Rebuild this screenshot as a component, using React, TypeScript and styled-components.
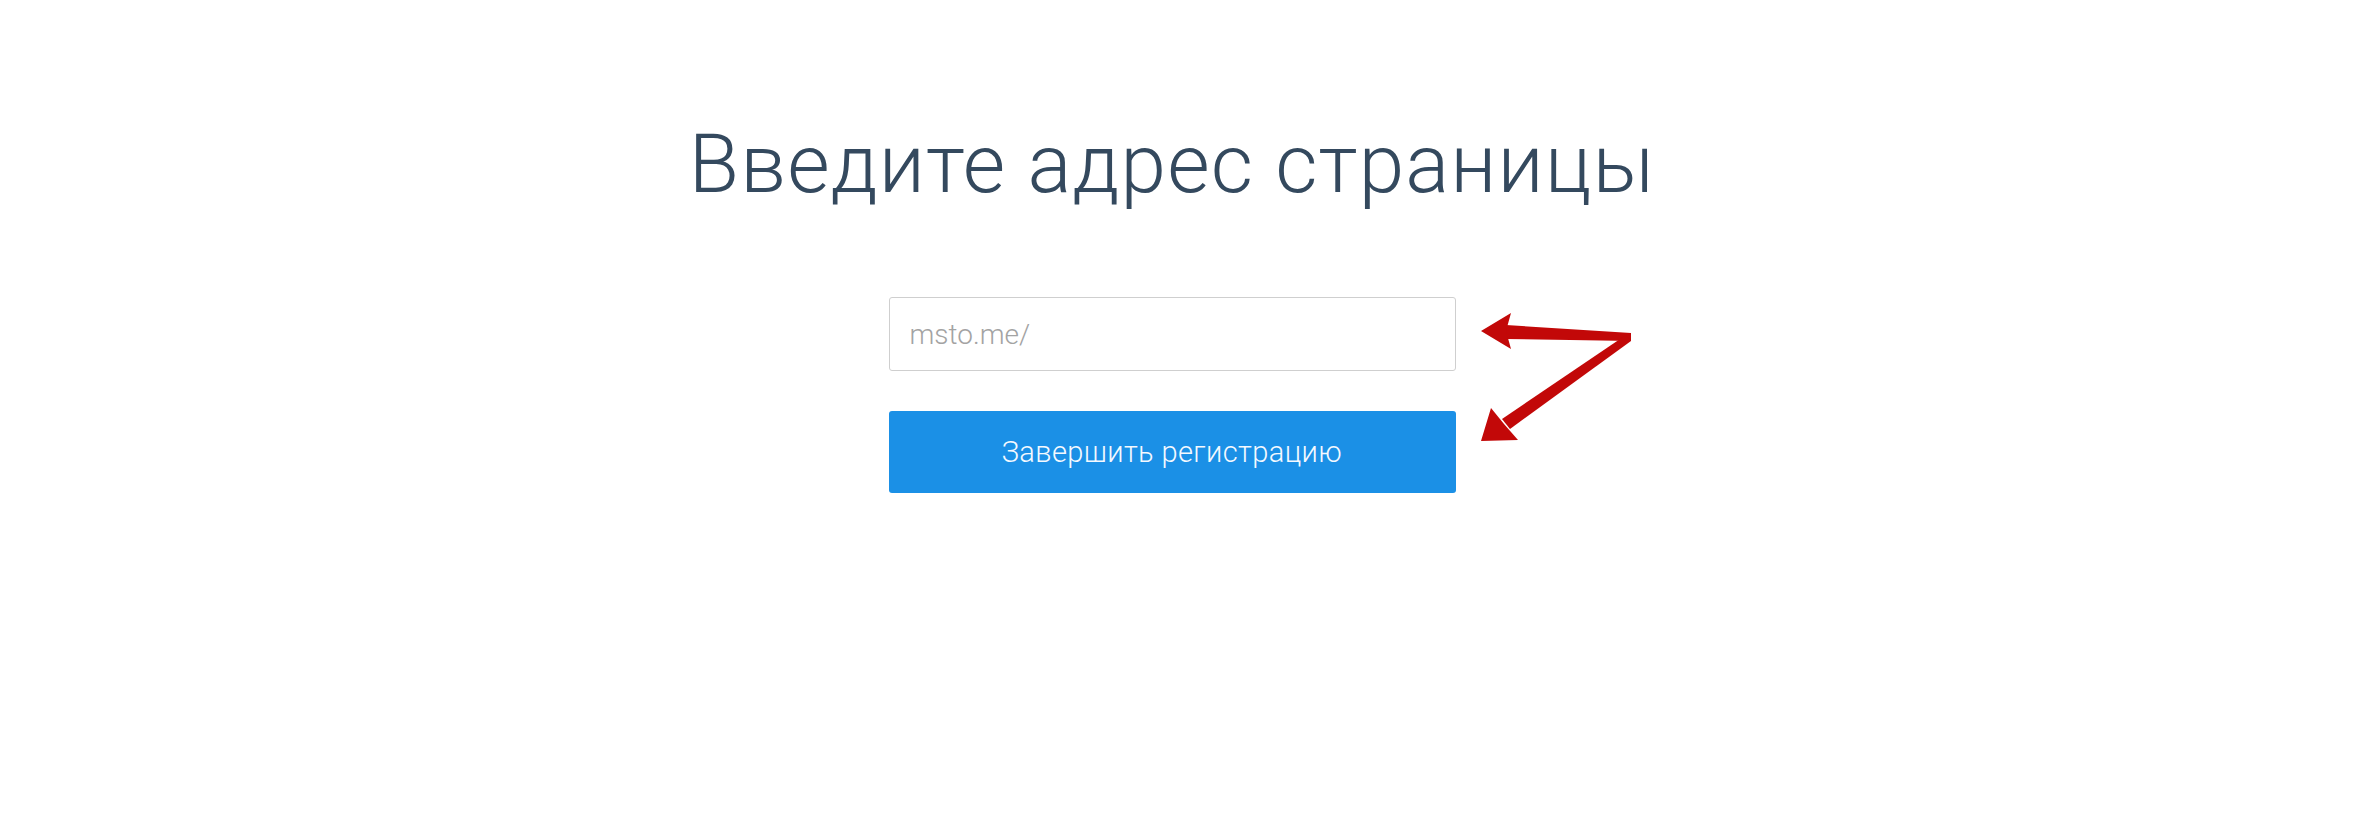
import styled, { createGlobalStyle } from "styled-components"

const GlobalStyle = createGlobalStyle`
  html, body {
    margin: 0;
    padding: 0;
    background: #ffffff;
  }
  body {
    font-family: Roboto, "Liberation Sans", sans-serif;
  }
`

const Page = styled.main`
  display: flex;
  flex-direction: column;
  align-items: center;
  padding: 116px 28px 0 0;
  min-height: 818px;
  box-sizing: border-box;
`

const Title = styled.h1`
  margin: 0;
  font-family: Roboto, "Liberation Sans", sans-serif;
  font-weight: 300;
  font-size: 82px;
  line-height: 96px;
  letter-spacing: 1.1px;
  color: #34495e;
  white-space: nowrap;
`

const Form = styled.form`
  position: relative;
  display: flex;
  flex-direction: column;
  gap: 40px;
  width: 567px;
  margin-top: 85px;
`

const AddressInput = styled.input`
  box-sizing: border-box;
  width: 100%;
  height: 74px;
  padding: 0 20px;
  border: 1px solid #cfcfcf;
  border-radius: 3px;
  font-family: Roboto, "Liberation Sans", sans-serif;
  font-weight: 300;
  font-size: 28px;
  color: #333;
  outline: none;

  &::placeholder {
    color: #a3a3a3;
  }
`

const SubmitButton = styled.button`
  box-sizing: border-box;
  width: 100%;
  height: 82px;
  border: none;
  border-radius: 3px;
  background: #1b90e6;
  color: #f4f9ff;
  font-family: Roboto, "Liberation Sans", sans-serif;
  font-weight: 300;
  font-size: 29px;
  letter-spacing: 0.4px;
  cursor: pointer;
`

// hand-drawn annotation arrows lying over the page
const Arrows = styled.svg`
  position: absolute;
  left: 587px;
  top: 13px;
  width: 165px;
  height: 140px;
  pointer-events: none;
`

const RED = "#c20808"

const Annotation = () => (
  <Arrows viewBox="1475 310 165 140">
    <polygon fill={RED} points="1630,333 1505,325 1505,339 1630,341" />
    <polygon fill={RED} points="1480,331 1510,313 1505,331 1510,349" />
    <polygon fill={RED} points="1625,335 1501,419 1509,429 1630,341" />
    <polygon fill={RED} points="1480,441 1490,408 1503,424 1517,440" />
  </Arrows>
)

const App = () => {
  return (
    <>
      <GlobalStyle />
      <Page>
        <Title>Введите адрес страницы</Title>
        <Form onSubmit={(e) => e.preventDefault()}>
          <AddressInput type="text" placeholder="msto.me/" />
          <SubmitButton type="submit">Завершить регистрацию</SubmitButton>
          <Annotation />
        </Form>
      </Page>
    </>
  )
}

export default App
